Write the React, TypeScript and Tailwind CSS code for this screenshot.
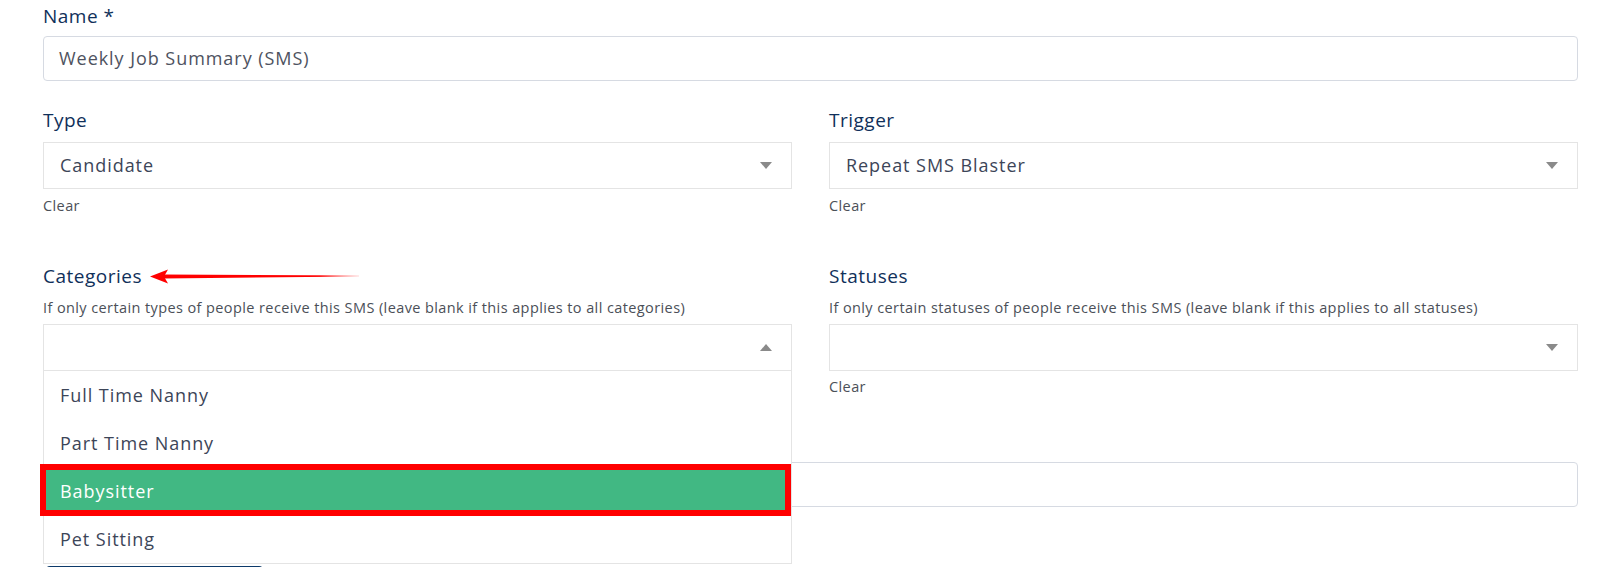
import React from "react";

const labelCls = "block h-6 text-[19px] leading-6 font-medium tracking-[0.5px] text-[#10305a]";
const hintCls = "block h-5 text-[14.5px] leading-5 tracking-[0.4px] text-[#4b4f58]";
const valueCls = "text-[18px] tracking-[0.95px]";

const Caret = ({ up }: { up?: boolean }) => (
  <svg width="12" height="7" viewBox="0 0 12 7" className="shrink-0">
    {up ? <polygon points="0,7 12,7 6,0" fill="#8a8a8a" /> : <polygon points="0,0 12,0 6,7" fill="#8a8a8a" />}
  </svg>
);

const Select = ({ value, up }: { value?: string; up?: boolean }) => (
  <div className={`flex h-[47px] items-center justify-between border border-[#e4e4e4] bg-white pl-4 pr-[19px] text-[#3c4558] ${valueCls}`}>
    <span>{value}</span>
    <Caret up={up} />
  </div>
);

export default function App() {
  const options = ["Full Time Nanny", "Part Time Nanny", "Babysitter", "Pet Sitting"];

  return (
    <div
      className="relative h-[567px] w-[1600px] overflow-hidden bg-white pl-[43px] pr-[22px] pt-1"
      style={{ fontFamily: "'Open Sans', 'Noto Sans', sans-serif" }}
    >
      {/* name */}
      <label className={labelCls}>Name *</label>
      <div className={`mt-2 flex h-[45px] items-center rounded border border-[#d6dae2] px-[15px] text-[#4e5260] ${valueCls}`}>
        Weekly Job Summary (SMS)
      </div>

      {/* type / trigger */}
      <div className="mt-[27px] grid grid-cols-2 gap-x-[37px]">
        <div>
          <label className={labelCls}>Type</label>
          <div className="mt-[10px]">
            <Select value="Candidate" />
          </div>
          <button className={`mt-[7px] ${hintCls}`}>Clear</button>
        </div>
        <div>
          <label className={labelCls}>Trigger</label>
          <div className="mt-[10px]">
            <Select value="Repeat SMS Blaster" />
          </div>
          <button className={`mt-[7px] ${hintCls}`}>Clear</button>
        </div>
      </div>

      {/* categories / statuses */}
      <div className="mt-[48px] grid grid-cols-2 gap-x-[37px]">
        <div>
          <div className="relative">
            <label className={labelCls}>Categories</label>
            {/* annotation arrow */}
            <svg
              width="215"
              height="20"
              viewBox="0 0 215 20"
              className="absolute left-[106px] top-[2px]"
            >
              <defs>
                <linearGradient id="tail" x1="0" x2="1" y1="0" y2="0">
                  <stop offset="0" stopColor="#ff0000" />
                  <stop offset="0.8" stopColor="#ff0000" />
                  <stop offset="1" stopColor="#ff0000" stopOpacity="0.15" />
                </linearGradient>
              </defs>
              <polygon points="14,8.5 210,9.6 210,10.4 14,12.5" fill="url(#tail)" />
              <polygon points="1,10.5 19,3.5 15,10.5 19,17.5" fill="#ff0000" />
            </svg>
          </div>
          <p className={`mt-[10px] whitespace-nowrap ${hintCls}`}>
            If only certain types of people receive this SMS (leave blank if this applies to all categories)
          </p>
          <div className="relative mt-[6px]">
            <Select up />

            {/* open menu */}
            <ul className={`absolute left-0 right-0 top-full z-10 -mt-px border border-[#e4e4e4] bg-white text-[#3c4558] ${valueCls}`}>
              {options.map((o) =>
                o === "Babysitter" ? (
                  <li key={o} className="relative flex h-12 items-center bg-[#41b883] px-4 text-white">
                    {o}
                    <span className="pointer-events-none absolute -bottom-px -left-[4px] right-0 -top-[3px] border-[6px] border-[#ff0000]" />
                  </li>
                ) : (
                  <li key={o} className="flex h-12 items-center px-4">
                    {o}
                  </li>
                )
              )}
            </ul>
          </div>
        </div>
        <div>
          <label className={labelCls}>Statuses</label>
          <p className={`mt-[10px] whitespace-nowrap ${hintCls}`}>
            If only certain statuses of people receive this SMS (leave blank if this applies to all statuses)
          </p>
          <div className="mt-[6px]">
            <Select />
          </div>
          <button className={`mt-[6px] ${hintCls}`}>Clear</button>
        </div>
      </div>

      {/* message field, mostly hidden by the open menu */}
      <div className="mt-[65px] h-[45px] rounded border border-[#d6dae2]" />

      {/* save button, only its top edge shows */}
      <button aria-label="Save" className="ml-[3px] mt-[59px] block h-10 w-[217px] rounded bg-[#0d3a6a]" />
    </div>
  );
}
